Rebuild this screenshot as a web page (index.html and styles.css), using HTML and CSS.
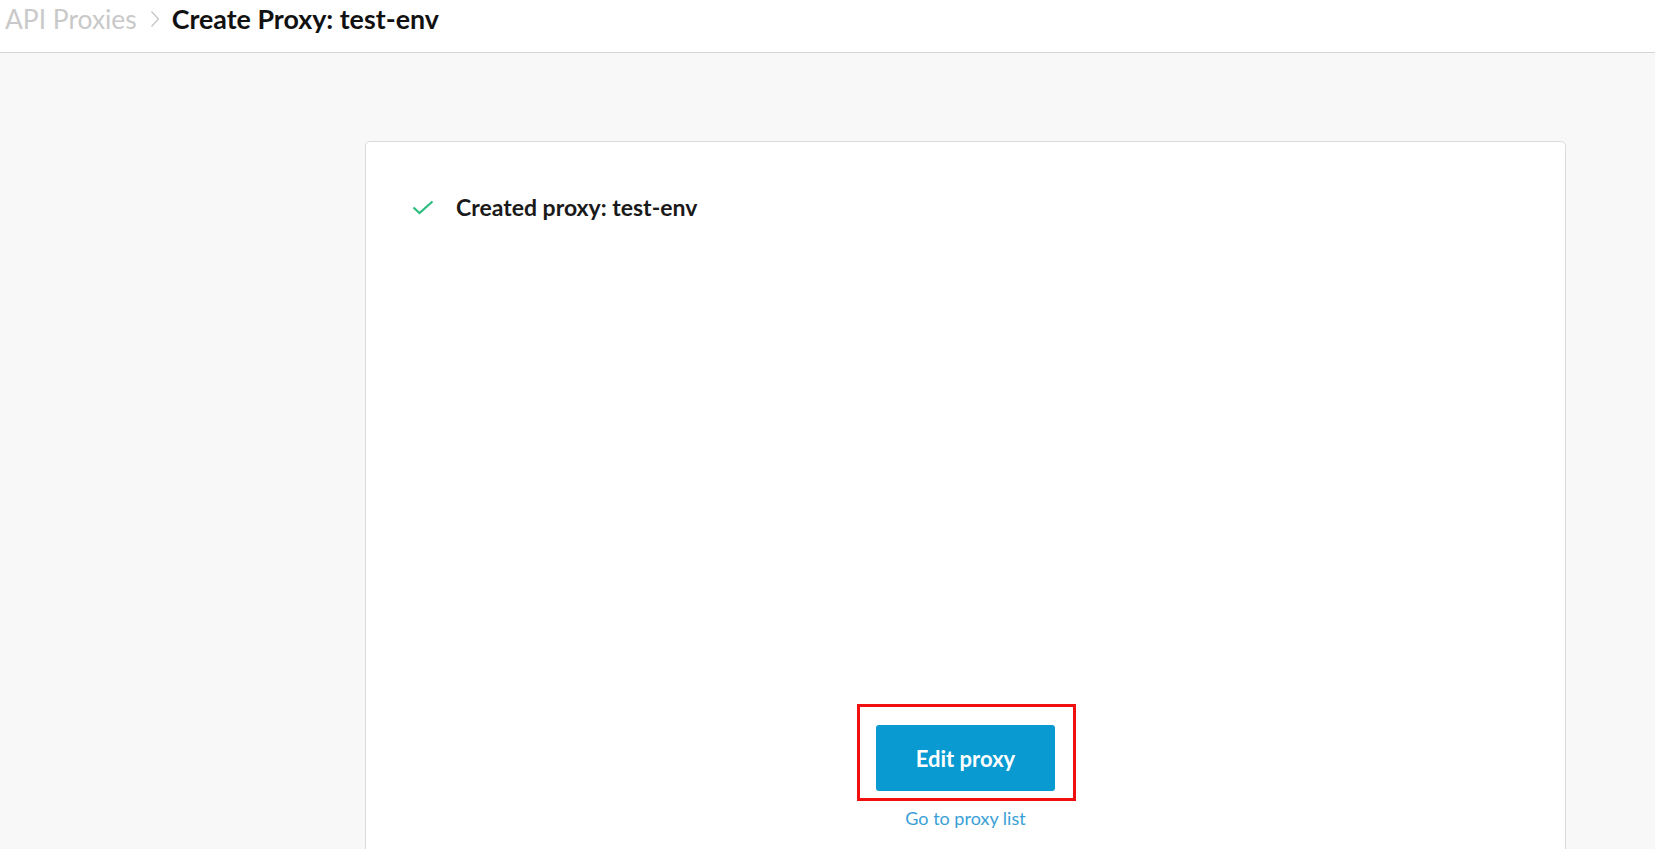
FILE: index.html
```html
<!DOCTYPE html>
<html lang="en">
<head>
<meta charset="utf-8">
<title>Create Proxy: test-env</title>
<link rel="stylesheet" href="styles.css">
</head>
<body>
<header class="topbar">
  <nav class="crumbs">
    <span class="crumb-parent">API Proxies</span>
    <svg class="crumb-sep" width="10" height="18" viewBox="0 0 10 18"><path d="M1.5 1.5 L8.5 9 L1.5 16.5" fill="none" stroke="#c4c4c4" stroke-width="1.2"/></svg>
    <h1 class="crumb-current">Create Proxy: test-env</h1>
  </nav>
</header>
<main class="page">
  <section class="card">
    <div class="status">
      <svg class="check" width="22" height="15" viewBox="0 0 22 15"><path d="M1.5 7.5 L7.5 13 L20.5 1.5" fill="none" stroke="#2dbd7e" stroke-width="2.2"/></svg>
      <span class="status-text">Created proxy: test-env</span>
    </div>
    <div class="actions">
      <div class="highlight">
        <button class="btn-primary">Edit proxy</button>
        <span class="mark"></span>
      </div>
      <a class="link" href="#">Go to proxy list</a>
    </div>
  </section>
</main>
</body>
</html>
```

FILE: styles.css
```css
html, body {
  margin: 0;
  padding: 0;
  height: 100%;
  overflow: hidden;
}
body {
  font-family: Lato, "Liberation Sans", sans-serif;
  background: #f7f8f7;
  color: #111;
}
.topbar {
  height: 52px;
  background: #fff;
  border-bottom: 1px solid #d6d6d6;
  display: flex;
  align-items: center;
}
.crumbs {
  display: flex;
  align-items: center;
  padding-left: 5px;
  margin-top: -14px;
}
.crumb-parent {
  font-size: 26.4px;
  color: #c9c9c9;
}
.crumb-sep {
  margin: 0 12px 0 13px;
}
.crumb-current {
  margin: 0;
  font-size: 26.8px;
  font-weight: 700;
  color: #111;
}
.page {
  padding-top: 88px;
  padding-left: 365px;
}
.card {
  width: 1201px;
  min-height: 760px;
  background: #fff;
  border: 1px solid #dadada;
  border-radius: 5px;
  box-sizing: border-box;
  padding: 50px 46px 0 46px;
}
.status {
  display: flex;
  align-items: center;
  height: 30px;
}
.check {
  margin-right: 22px;
}
.status-text {
  font-size: 23px;
  font-weight: 700;
  color: #1a1a1a;
}
.actions {
  margin-top: 503px;
  display: flex;
  flex-direction: column;
  align-items: center;
}
.highlight {
  position: relative;
}
.btn-primary {
  display: block;
  width: 179px;
  height: 66px;
  border: none;
  border-radius: 3px;
  background: #0a9ad2;
  color: #fff;
  font-family: Lato, "Liberation Sans", sans-serif;
  font-size: 22px;
  font-weight: 700;
  cursor: pointer;
}
.mark {
  position: absolute;
  left: -19px;
  top: -21px;
  right: -21px;
  bottom: -10px;
  border: 3px solid #f01010;
}
.link {
  margin-top: 16px;
  font-size: 18px;
  color: #3a9fd6;
  text-decoration: none;
}
```
